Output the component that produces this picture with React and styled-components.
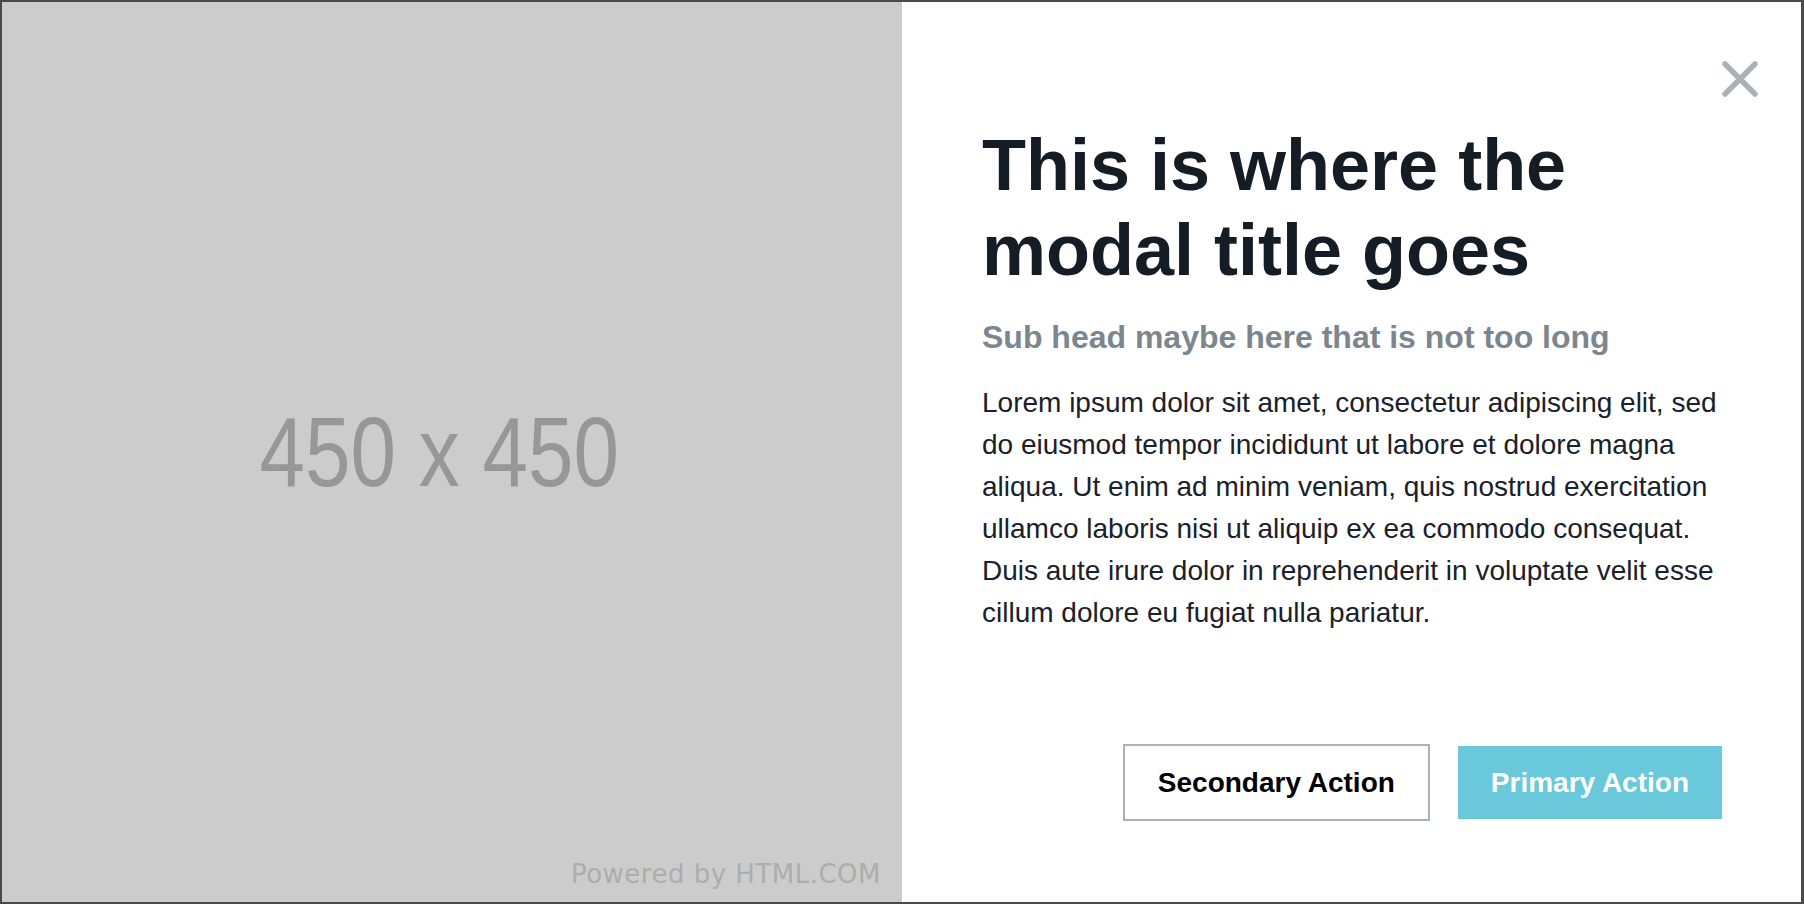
import React from 'react';
import styled, { createGlobalStyle } from 'styled-components';

const GlobalStyle = createGlobalStyle`
    html, body {
        margin: 0;
        padding: 0;
        background: #ffffff;
    }
    body {
        font-family: "Liberation Sans", Arial, Helvetica, sans-serif;
    }
    * {
        box-sizing: border-box;
    }
`;

const Modal = styled.section`
    display: flex;
    width: 1804px;
    height: 904px;
    border: 2px solid #4b4b4b;
    border-right-width: 3px;
    background-color: #ffffff;
    overflow: hidden;
`;

const ImagePane = styled.div`
    position: relative;
    flex: 0 0 900px;
    display: flex;
    align-items: center;
    justify-content: center;
    padding-right: 26px;
    background-color: #cccccc;
`;

// the placeholder uses a narrow face, squeeze the regular one
const PlaceholderLabel = styled.span`
    display: inline-block;
    font-family: "Liberation Sans", Arial, sans-serif;
    font-size: 98px;
    line-height: 1;
    color: #979797;
    white-space: nowrap;
    transform: scaleX(0.835);
`;

const Watermark = styled.span`
    position: absolute;
    right: 21px;
    bottom: 12px;
    font-family: "DejaVu Sans", Verdana, sans-serif;
    font-size: 26px;
    line-height: 1.2;
    letter-spacing: 0.5px;
    color: #adadad;
    white-space: nowrap;
`;

const ContentPane = styled.div`
    position: relative;
    flex: 1;
    display: flex;
    flex-direction: column;
    padding: 121px 79px 81px 80px;
`;

const CloseButton = styled.button`
    position: absolute;
    top: 59px;
    right: 43px;
    width: 36px;
    height: 36px;
    padding: 0;
    border: 0;
    background: none;
    cursor: pointer;
    display: flex;
`;

const Title = styled.h1`
    margin: 0;
    font-size: 72px;
    line-height: 85px;
    font-weight: 700;
    color: #141c25;
`;

const SubHead = styled.h2`
    margin: 25px 0 0;
    font-size: 32px;
    line-height: 38px;
    font-weight: 700;
    color: #7b868e;
`;

const Body = styled.p`
    margin: 26px 0 0;
    font-size: 28px;
    line-height: 42px;
    font-weight: 400;
    color: #19212a;
`;

const Actions = styled.div`
    margin-top: auto;
    display: flex;
    justify-content: flex-end;
    align-items: center;
    gap: 28px;
`;

const Button = styled.button`
    font-family: "Liberation Sans", Arial, sans-serif;
    font-size: 28px;
    line-height: 33px;
    font-weight: 700;
    padding: 20px 33px;
    border: ${(p) => (p.$primary ? '0' : '2px solid #a9b2b8')};
    background-color: ${(p) => (p.$primary ? '#69c9da' : '#ffffff')};
    color: ${(p) => (p.$primary ? '#ffffff' : '#000000')};
    cursor: pointer;
`;

const CloseIcon = () => (
    <svg width="36" height="36" viewBox="0 0 36 36" fill="none">
        <path
            d="M3 3 L33 33 M33 3 L3 33"
            stroke="#aab2b8"
            strokeWidth="5.5"
            strokeLinecap="round"
        />
    </svg>
);

const App = () => {
    return (
        <>
            <GlobalStyle />
            <Modal>
                <ImagePane>
                    <PlaceholderLabel>450 x 450</PlaceholderLabel>
                    <Watermark>Powered by HTML.COM</Watermark>
                </ImagePane>
                <ContentPane>
                    <CloseButton aria-label="Close">
                        <CloseIcon />
                    </CloseButton>
                    <Title>This is where the modal title goes</Title>
                    <SubHead>Sub head maybe here that is not too long</SubHead>
                    <Body>
                        Lorem ipsum dolor sit amet, consectetur adipiscing elit, sed do eiusmod
                        tempor incididunt ut labore et dolore magna aliqua. Ut enim ad minim
                        veniam, quis nostrud exercitation ullamco laboris nisi ut aliquip ex ea
                        commodo consequat. Duis aute irure dolor in reprehenderit in voluptate
                        velit esse cillum dolore eu fugiat nulla pariatur.
                    </Body>
                    <Actions>
                        <Button>Secondary Action</Button>
                        <Button $primary>Primary Action</Button>
                    </Actions>
                </ContentPane>
            </Modal>
        </>
    );
};

export default App;
